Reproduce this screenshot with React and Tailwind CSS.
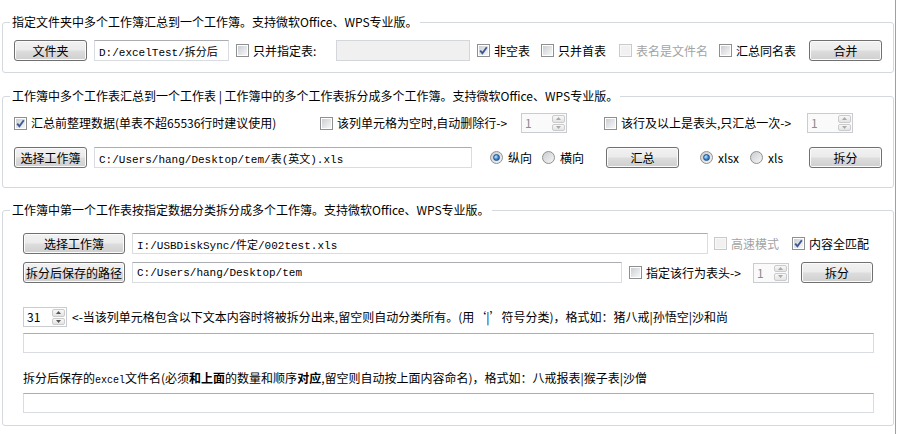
function Btn({ children, className = "" }) {
  return (
    <button
      type="button"
      className={`h-[21px] shrink-0 rounded-[3px] border border-[#707070] bg-[linear-gradient(to_bottom,#f2f2f2_0%,#ebebeb_48%,#dddddd_52%,#cfcfcf_100%)] p-0 text-[12px] leading-[16px] whitespace-nowrap text-black shadow-[inset_0_0_0_1px_#fbfbfb] ${className}`}
    >
      {children}
    </button>
  );
}

function Field({ value = "", disabled = false, className = "" }) {
  return (
    <input
      readOnly
      value={value}
      className={`shrink-0 border pl-[4px] font-['Liberation_Mono','Noto_Sans_CJK_SC',monospace] text-[11px] text-black outline-none ${
        disabled ? "border-[#d3d6da] bg-[#f0f0f0]" : "border-[#d9dde2] border-t-[#abadb3] bg-white"
      } ${className}`}
    />
  );
}

function Check({ label, checked = false, disabled = false, className = "" }) {
  return (
    <label
      className={`flex shrink-0 items-center gap-[4px] text-[12px] leading-[16px] ${
        disabled ? "text-[#a3a3a3]" : "text-black"
      } ${className}`}
    >
      <span
        className={`relative flex h-[13px] w-[13px] shrink-0 border p-[1px] ${
          disabled ? "border-[#cacaca] bg-[#f8f8f8]" : "border-[#8e8f8f] bg-white"
        }`}
      >
        <span
          className={`h-full w-full ${
            disabled ? "bg-[#f1f1f1]" : "bg-[linear-gradient(135deg,#cbced3_0%,#e6e7e9_60%,#f7f7f7_100%)]"
          }`}
        />
        {checked && (
          <svg className="absolute left-[1px] top-[1px]" width="9" height="9" viewBox="0 0 9 9">
            <path d="M1.2 4.6 L3.4 7.2 L7.8 1.2" fill="none" stroke="#3c5898" strokeWidth="1.9" />
          </svg>
        )}
      </span>
      <span className="whitespace-nowrap">{label}</span>
    </label>
  );
}

function Radio({ label, checked = false, className = "" }) {
  return (
    <label className={`flex shrink-0 items-center gap-[5px] text-[12px] leading-[16px] text-black ${className}`}>
      <span className="flex h-[13px] w-[13px] shrink-0 items-center justify-center rounded-full border border-[#8e8f8f] bg-[linear-gradient(135deg,#c9ccd1,#f6f6f6)]">
        {checked && (
          <span className="h-[7px] w-[7px] rounded-full border border-[#1d4f86] bg-[radial-gradient(circle_at_35%_35%,#c2e6ff_0%,#3b86d1_55%,#1b4d8c_100%)]" />
        )}
      </span>
      <span className="whitespace-nowrap">{label}</span>
    </label>
  );
}

function Spin({ value, disabled = false, className = "" }) {
  const arrow = disabled ? "#a9a9a9" : "#555555";
  return (
    <div
      className={`flex h-[20px] shrink-0 border border-[#c9ccd0] ${disabled ? "bg-[#fafafa]" : "bg-white"} ${className}`}
    >
      <span
        className={`flex-1 pl-[3px] text-[12px] leading-[18px] ${disabled ? "text-[#8c8c8c]" : "text-black"}`}
      >
        {value}
      </span>
      <span className="flex w-[15px] flex-col gap-[1px] p-[1px]">
        <span className="flex flex-1 items-center justify-center rounded-[2px] border border-[#cbcbcb] bg-[linear-gradient(#f8f8f8,#e3e3e3)]">
          <svg width="5" height="3" viewBox="0 0 5 3">
            <path d="M0 3 L2.5 0 L5 3Z" fill={arrow} />
          </svg>
        </span>
        <span className="flex flex-1 items-center justify-center rounded-[2px] border border-[#cbcbcb] bg-[linear-gradient(#f8f8f8,#e3e3e3)]">
          <svg width="5" height="3" viewBox="0 0 5 3">
            <path d="M0 0 L2.5 3 L5 0Z" fill={arrow} />
          </svg>
        </span>
      </span>
    </div>
  );
}

function Group({ title, className = "", children }) {
  return (
    <fieldset className={`w-[892px] rounded-[3px] border border-[#d5d9dd] ${className}`}>
      <legend className="ml-[7px] px-[2px] text-[12px] leading-[16px] whitespace-nowrap text-black">{title}</legend>
      {children}
    </fieldset>
  );
}

export default function App() {
  return (
    <div className="h-[434px] w-[896px] overflow-hidden border-r border-[#a0a0a0] bg-white pl-[2px] pt-[14px] font-['Noto_Sans_CJK_SC',sans-serif] text-black">
      {/* 合并工作簿 */}
      <Group title="指定文件夹中多个工作簿汇总到一个工作簿。支持微软Office、WPS专业版。">
        <div className="flex items-center pb-[11px] pl-[11px] pt-[10px]">
          <Btn className="w-[73px]">文件夹</Btn>
          <Field value="D:/excelTest/拆分后" className="ml-[7px] h-[21px] w-[135px]" />
          <Check label="只并指定表:" className="ml-[7px] w-[100px]" />
          <Field disabled className="h-[21px] w-[134px]" />
          <Check label="非空表" checked className="ml-[7px] w-[64px]" />
          <Check label="只并首表" className="w-[78px]" />
          <Check label="表名是文件名" disabled className="w-[100px]" />
          <Check label="汇总同名表" className="w-[90px]" />
          <Btn className="w-[73px]">合并</Btn>
        </div>
      </Group>

      {/* 汇总 / 拆分工作表 */}
      <Group
        title="工作簿中多个工作表汇总到一个工作表 | 工作簿中的多个工作表拆分成多个工作簿。支持微软Office、WPS专业版。"
        className="mt-[15px]"
      >
        <div className="pb-[19px] pl-[11px] pt-[9px]">
          <div className="flex items-center">
            <Check label="汇总前整理数据(单表不超65536行时建议使用)" checked className="w-[306px]" />
            <Check label="该列单元格为空时,自动删除行->" className="w-[201px]" />
            <Spin value="1" disabled className="w-[46px]" />
            <Check label="该行及以上是表头,只汇总一次->" className="ml-[37px] w-[203px]" />
            <Spin value="1" disabled className="w-[46px]" />
          </div>
          <div className="mt-[14px] flex items-center">
            <Btn className="w-[73px]">选择工作簿</Btn>
            <Field value="C:/Users/hang/Desktop/tem/表(英文).xls" className="ml-[7px] h-[21px] w-[378px]" />
            <Radio label="纵向" checked className="ml-[18px] w-[52px]" />
            <Radio label="横向" className="w-[64px]" />
            <Btn className="w-[73px]">汇总</Btn>
            <Radio label="xlsx" checked className="ml-[21px] w-[50px]" />
            <Radio label="xls" className="w-[59px]" />
            <Btn className="w-[73px]">拆分</Btn>
          </div>
        </div>
      </Group>

      {/* 按数据分类拆分 */}
      <Group
        title="工作簿中第一个工作表按指定数据分类拆分成多个工作簿。支持微软Office、WPS专业版。"
        className="mt-[14px]"
      >
        <div className="pb-[12px] pl-[20px] pt-[15px]">
          <div className="flex items-center">
            <Btn className="w-[102px]">选择工作簿</Btn>
            <Field value="I:/USBDiskSync/件定/002test.xls" className="ml-[7px] h-[21px] w-[576px]" />
            <Check label="高速模式" disabled className="ml-[6px] w-[78px]" />
            <Check label="内容全匹配" checked />
          </div>
          <div className="mt-[8px] flex items-center">
            <Btn className="w-[102px]">拆分后保存的路径</Btn>
            <Field value="C:/Users/hang/Desktop/tem" className="ml-[7px] h-[21px] w-[490px]" />
            <Check label="指定该行为表头->" className="ml-[7px] w-[124px]" />
            <Spin value="1" disabled className="w-[36px]" />
            <Btn className="ml-[12px] w-[72px]">拆分</Btn>
          </div>
          <div className="mt-[24px] flex items-center">
            <Spin value="31" className="w-[44px]" />
            <span className="ml-[5px] whitespace-nowrap text-[12px] leading-[16px]">
              &lt;-当该列单元格包含以下文本内容时将被拆分出来,留空则自动分类所有。(用‘|’符号分类)，格式如：猪八戒|孙悟空|沙和尚
            </span>
          </div>
          <Field className="mt-[6px] block h-[20px] w-[851px]" />
          <p className="mt-[17px] whitespace-nowrap text-[12px] leading-[16px]">
            拆分后保存的
            <span className="font-['Liberation_Mono',monospace] text-[10px]">excel</span>
            文件名(必须<b>和上面</b>的数量和顺序<b>对应</b>,留空则自动按上面内容命名)，格式如：八戒报表|猴子表|沙僧
          </p>
          <Field className="mt-[4px] block h-[20px] w-[851px]" />
        </div>
      </Group>
    </div>
  );
}
